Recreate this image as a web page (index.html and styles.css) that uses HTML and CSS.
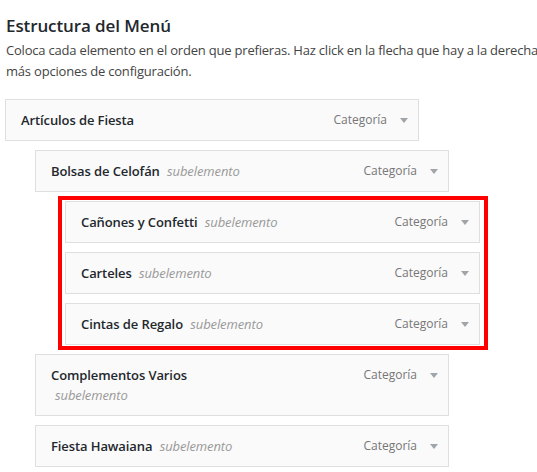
FILE: index.html
```html
<!DOCTYPE html>
<html lang="es">
<head>
<meta charset="utf-8">
<title>Estructura del Menú</title>
<link rel="stylesheet" href="styles.css">
</head>
<body>
<div class="page">
  <h3 class="heading">Estructura del Menú</h3>
  <p class="desc">Coloca cada elemento en el orden que prefieras. Haz click en la flecha que hay a la derecha<br>más opciones de configuración.</p>
  <ul class="menu">
    <li class="item depth-0">
      <div class="handle">
        <span class="title">Artículos de Fiesta</span>
        <span class="controls"><span class="type">Categoría</span><svg class="arrow" width="8" height="5" viewBox="0 0 8 5"><path d="M0 0H8L4 5Z"/></svg></span>
      </div>
    </li>
    <li class="item depth-1">
      <div class="handle">
        <span class="title">Bolsas de Celofán <span class="sub">subelemento</span></span>
        <span class="controls"><span class="type">Categoría</span><svg class="arrow" width="8" height="5" viewBox="0 0 8 5"><path d="M0 0H8L4 5Z"/></svg></span>
      </div>
    </li>
    <li class="highlight">
      <ul class="group">
        <li class="item">
          <div class="handle">
            <span class="title">Cañones y Confetti <span class="sub">subelemento</span></span>
            <span class="controls"><span class="type">Categoría</span><svg class="arrow" width="8" height="5" viewBox="0 0 8 5"><path d="M0 0H8L4 5Z"/></svg></span>
          </div>
        </li>
        <li class="item">
          <div class="handle">
            <span class="title">Carteles <span class="sub">subelemento</span></span>
            <span class="controls"><span class="type">Categoría</span><svg class="arrow" width="8" height="5" viewBox="0 0 8 5"><path d="M0 0H8L4 5Z"/></svg></span>
          </div>
        </li>
        <li class="item">
          <div class="handle">
            <span class="title">Cintas de Regalo <span class="sub">subelemento</span></span>
            <span class="controls"><span class="type">Categoría</span><svg class="arrow" width="8" height="5" viewBox="0 0 8 5"><path d="M0 0H8L4 5Z"/></svg></span>
          </div>
        </li>
      </ul>
    </li>
    <li class="item depth-1">
      <div class="handle">
        <span class="title">Complementos Varios <span class="sub">subelemento</span></span>
        <span class="controls"><span class="type">Categoría</span><svg class="arrow" width="8" height="5" viewBox="0 0 8 5"><path d="M0 0H8L4 5Z"/></svg></span>
      </div>
    </li>
    <li class="item depth-1">
      <div class="handle">
        <span class="title">Fiesta Hawaiana <span class="sub">subelemento</span></span>
        <span class="controls"><span class="type">Categoría</span><svg class="arrow" width="8" height="5" viewBox="0 0 8 5"><path d="M0 0H8L4 5Z"/></svg></span>
      </div>
    </li>
  </ul>
</div>
</body>
</html>
```
FILE: styles.css
```css
html, body {
  margin: 0;
  padding: 0;
  overflow: hidden;
  background: #fff;
}
body {
  font-family: "Open Sans", "Liberation Sans", sans-serif;
  font-size: 13px;
  color: #444;
  letter-spacing: -0.1px;
}
.page {
  padding: 0 0 0 5px;
}
.heading {
  margin: 0;
  padding-top: 14px;
  font-size: 17px;
  line-height: 24px;
  font-weight: 600;
  color: #23282d;
  padding-left: 1px;
}
.desc {
  margin: 2px 0 0 1px;
  white-space: nowrap;
  font-size: 13px;
  line-height: 21px;
  letter-spacing: -0.2px;
  color: #444;
}
.menu, .group {
  list-style: none;
  margin: 0;
  padding: 0;
  display: flex;
  flex-direction: column;
  gap: 9px;
}
.menu {
  margin-top: 17px;
}
.depth-1 {
  margin-left: 30px;
}
.highlight {
  margin: -5px 0 -5px 53px;
  width: 415px;
  border: 4px solid #ff0000;
  padding: 1px 4px 1px 3px;
}
.handle {
  box-sizing: border-box;
  width: 414px;
  border: 1px solid #dfdfdf;
  background: #fafafa;
  padding: 10px 10px 10px 15px;
  display: flex;
  justify-content: space-between;
  align-items: flex-start;
}
.group .handle {
  width: 415px;
}
.title {
  font-weight: 600;
  font-size: 13px;
  line-height: 20px;
  color: #23282d;
  max-width: 213px;
}
.sub {
  margin-left: 4px;
  font-weight: 400;
  font-style: italic;
  color: #999;
}
.controls {
  display: flex;
  align-items: center;
  height: 20px;
}
.type {
  font-size: 12px;
  line-height: 20px;
  letter-spacing: 0;
  color: #777;
}
.arrow {
  margin-left: 13px;
  fill: #a0a5aa;
}
```
